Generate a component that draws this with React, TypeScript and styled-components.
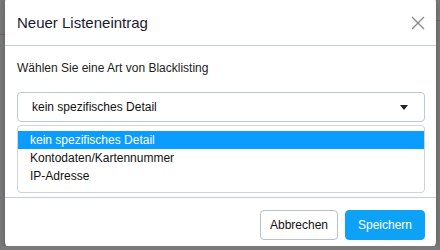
import React, { useState } from 'react';
import styled, { createGlobalStyle } from 'styled-components';

const GlobalStyle = createGlobalStyle`
  html, body {
    margin: 0;
    padding: 0;
    overflow: hidden;
  }
  body {
    font-family: 'Liberation Sans', Arial, sans-serif;
    background: #7a7a7a;
  }
`;

const Backdrop = styled.div`
  box-sizing: border-box;
  height: 250px;
  padding: 0 4px 0 5px;
  background:
    linear-gradient(#6a6a6a, #6a6a6a) 0 38px / 5px 1px no-repeat,
    linear-gradient(#6a6a6a, #6a6a6a) 436px 24px / 4px 1px no-repeat,
    #7a7a7a;
`;

const Modal = styled.div`
  margin-top: -4px;
  background: #fff;
  border-radius: 6px;
  box-shadow: 0 2px 6px rgba(0, 0, 0, 0.25);
  display: flex;
  flex-direction: column;
`;

const Header = styled.div`
  height: 50px;
  box-sizing: border-box;
  padding: 4px 11px 0 12px;
  display: flex;
  align-items: center;
  justify-content: space-between;
  border-bottom: 1px solid #c2ceda;
`;

const Title = styled.h1`
  margin: 0;
  font-size: 15px;
  font-weight: normal;
  color: #1a1a2e;
`;

const CloseButton = styled.button`
  border: none;
  background: none;
  padding: 0;
  width: 14px;
  height: 14px;
  display: flex;
  cursor: pointer;
`;

const Body = styled.div`
  padding: 14px 11px 4px 12px;
  display: flex;
  flex-direction: column;
`;

const Label = styled.div`
  font-size: 12px;
  line-height: 16px;
  color: #222;
`;

const SelectBox = styled.div`
  margin-top: 16px;
  height: 30px;
  box-sizing: border-box;
  border: 1px solid #bcc8d4;
  border-radius: 4px;
  padding: 0 16px 0 14px;
  display: flex;
  align-items: center;
  justify-content: space-between;
  font-size: 12px;
  color: #111;
`;

const OptionList = styled.ul`
  list-style: none;
  margin: 3px 0 0;
  padding: 5px 0 7px;
  border: 1px solid #cfd4da;
  border-radius: 4px;
`;

const Option = styled.li<{ $active?: boolean }>`
  height: 18px;
  line-height: 18px;
  padding-left: 12px;
  font-size: 12px;
  color: ${(p) => (p.$active ? '#fff' : '#111')};
  background: ${(p) => (p.$active ? '#0a9cff' : 'transparent')};
`;

const Footer = styled.div`
  border-top: 1px solid #c2ceda;
  padding: 12px 11px 8px;
  display: flex;
  justify-content: flex-end;
  gap: 7px;
`;

const Button = styled.button<{ $primary?: boolean }>`
  height: 30px;
  box-sizing: border-box;
  padding: 0;
  font-family: 'Liberation Sans', Arial, sans-serif;
  font-size: 12px;
  border-radius: 4px;
  border: 1px solid ${(p) => (p.$primary ? '#0ea2f7' : '#b4c2d0')};
  background: ${(p) => (p.$primary ? '#0ea2f7' : '#fff')};
  color: ${(p) => (p.$primary ? '#fff' : '#111')};
  width: ${(p) => (p.$primary ? '80px' : '78px')};
  cursor: pointer;
`;

const options = ['kein spezifisches Detail', 'Kontodaten/Kartennummer', 'IP-Adresse'];

const App: React.FunctionComponent = () => {
  const [selected] = useState(0);

  return (
    <>
      <GlobalStyle />
      <Backdrop>
        <Modal>
          <Header>
            <Title>Neuer Listeneintrag</Title>
            <CloseButton aria-label="Schließen">
              <svg width="14" height="14" viewBox="0 0 14 14">
                <path d="M1 1L13 13M13 1L1 13" stroke="#8a8a8a" strokeWidth="1.4" />
              </svg>
            </CloseButton>
          </Header>
          <Body>
            <Label>Wählen Sie eine Art von Blacklisting</Label>
            <SelectBox>
              <span>{options[selected]}</span>
              <svg width="8" height="5" viewBox="0 0 8 5">
                <path d="M0 0H8L4 5Z" fill="#222" />
              </svg>
            </SelectBox>
            <OptionList>
              {options.map((o, i) => (
                <Option key={o} $active={i === selected}>
                  {o}
                </Option>
              ))}
            </OptionList>
          </Body>
          <Footer>
            <Button>Abbrechen</Button>
            <Button $primary>Speichern</Button>
          </Footer>
        </Modal>
      </Backdrop>
    </>
  );
};

export default App;
